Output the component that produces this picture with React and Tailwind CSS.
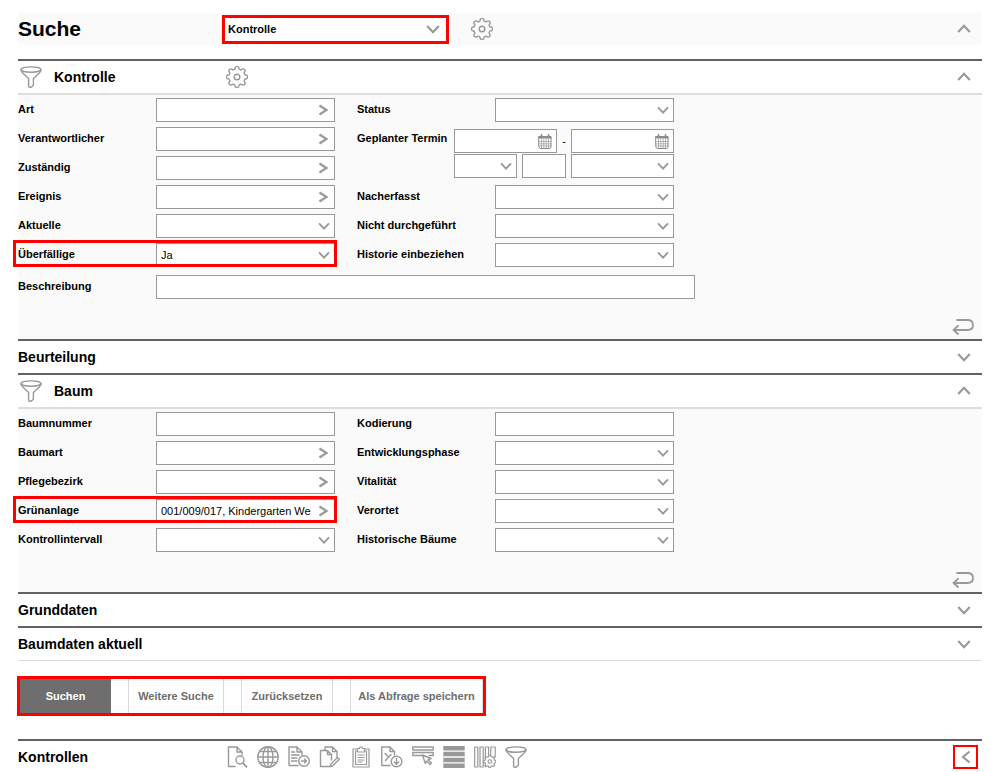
import { useId, useState } from "react";

function Icon({ children, className = "w-[22px] h-[22px]", box = "0 0 22 22", stroke = 1.4 }) {
  return (
    <svg
      className={`${className} shrink-0`}
      viewBox={box}
      fill="none"
      stroke="currentColor"
      strokeWidth={stroke}
      strokeLinecap="round"
      strokeLinejoin="round"
      aria-hidden="true"
    >
      {children}
    </svg>
  );
}

const chevrons = {
  down: "M1.2 4 L7 10.2 L12.8 4",
  up: "M1.2 10 L7 3.8 L12.8 10",
  left: "M10.5 1.5 L4 7 L10.5 12.5",
  right: "M3.5 2.5 L10.5 7 L3.5 11.5",
};

function Chevron({ dir, className = "w-3.5 h-3.5" }) {
  return (
    <Icon className={className} box="0 0 14 14" stroke={2.2}>
      <path d={chevrons[dir]} strokeLinecap="butt" strokeLinejoin="miter" />
    </Icon>
  );
}

// eight rounded teeth with a round notch between each pair
const point = (deg, r) => {
  const a = (deg * Math.PI) / 180;
  return `${(11 + r * Math.cos(a)).toFixed(2)} ${(11 + r * Math.sin(a)).toFixed(2)}`;
};
const gearPath =
  `M${point(-11, 9.6)}` +
  [0, 45, 90, 135, 180, 225, 270, 315]
    .map((t) => `A2 2 0 0 1 ${point(t + 11, 9.6)}A2 2 0 0 0 ${point(t + 34, 9.6)}`)
    .join("") +
  "Z";

function GearIcon() {
  return (
    <Icon>
      <path d={gearPath} />
      <circle cx="11" cy="11" r="2.8" />
    </Icon>
  );
}

function FunnelIcon() {
  return (
    <Icon>
      <ellipse cx="11" cy="3.6" rx="10" ry="2.7" />
      <path d="M1 3.8 C1 5.5 2 6.3 3 7.2 L8.6 12.6 V20 C8.6 21.6 11 21.6 12 20.6 L13.4 19 V12.6 L19 7.2 C20 6.3 21 5.5 21 3.8" />
    </Icon>
  );
}

function ReturnIcon() {
  return (
    <Icon className="w-[22px] h-4" box="0 0 22 16" stroke={1.8}>
      <path d="M5 1 H15.5 C19 1 21 3 21 6 S19 11 15.5 11 H1.5 M6 6.8 L1.5 11 L6 15" />
    </Icon>
  );
}

function CalendarIcon() {
  return (
    <Icon className="w-3.5 h-[15px]" box="0 0 14 15" stroke={1}>
      <path d="M1 2.5 H13 V13 L12 14.5 H2 L1 13 Z" />
      <path d="M1.5 3.5 H12.5" strokeWidth="2.2" />
      <path d="M3.5 0.5 V3 M10.5 0.5 V3" strokeWidth="1.6" />
      <path d="M1 7.5 H13 M1 9.8 H13 M1 12 H13 M3.5 5 V14 M5.8 5 V14 M8.2 5 V14 M10.5 5 V14" strokeWidth="0.6" />
    </Icon>
  );
}

const toolbar = [
  {
    label: "Vorschau",
    icon: (
      <Icon>
        <path d="M9 20.5 H2.5 V1 H11 L16 6 V9 M11 1 V6 H16" />
        <circle cx="14" cy="14" r="4" />
        <path d="M17 17 L20.5 20.8" strokeWidth="1.8" />
      </Icon>
    ),
  },
  {
    label: "Karte",
    icon: (
      <Icon>
        <circle cx="11" cy="11" r="10.2" />
        <ellipse cx="11" cy="11" rx="5" ry="10.2" />
        <path d="M11 1 V21 M1 11 H21 M2.6 5.5 H19.4 M2.6 16.5 H19.4" />
      </Icon>
    ),
  },
  {
    label: "Exportieren",
    icon: (
      <Icon>
        <path d="M10 19.5 H1 V1 H9 L14 6 V9 M9 1 V6 H14 M3.5 6 H6.5 M3.5 9 H11 M3.5 12 H9 M3.5 15 H9" />
        <circle cx="16" cy="15" r="5.2" />
        <path d="M13.5 15 H18.5 M16.5 13 L18.5 15 L16.5 17" />
      </Icon>
    ),
  },
  {
    label: "Bearbeiten",
    icon: (
      <Icon>
        <path d="M6 4.5 V1 H13.5 L18 5.5 V11 M13.5 1 V5.5 H18" />
        <path d="M11 20.5 H1.5 V4.5 H8.5 L12.5 8.5 V14 M8.5 4.5 V8.5 H12.5" />
        <path d="M18.5 11.5 L20.3 13.2 L13.8 19.8 L11.3 20.5 L12 18 Z" />
      </Icon>
    ),
  },
  {
    label: "Zwischenablage",
    icon: (
      <Icon stroke={1.2}>
        <path d="M7 3 H3 V21 H19 V3 H15" />
        <path d="M7 5 H5.5 V18.5 H16.5 V5 H15" />
        <path d="M7.5 6 V2.5 H9.5 L10 1 H12 L12.5 2.5 H14.5 V6 Z M8 9 H14 M8 11.5 H14 M8 14 H14 M8 16 H12" />
      </Icon>
    ),
  },
  {
    label: "Herunterladen",
    icon: (
      <Icon>
        <path d="M9 19.5 H0.8 V1 H9 L13.5 5.5 V9 M9 1 V5.5 H13.5" />
        <path d="M4 7.5 L7.5 11 M10 8.5 L4.5 14.5" />
        <circle cx="15.5" cy="15.5" r="5.3" />
        <path d="M15.5 12.5 V18 M13.2 16 L15.5 18.2 L17.8 16" />
      </Icon>
    ),
  },
  {
    label: "Zeile auswählen",
    icon: (
      <Icon>
        <path d="M0.8 1 H21.2 V4 H0.8 Z M10 9.5 H0.8 V6.5 H21.2 V9.5 H17" />
        <path d="M10.5 9 L19 12.5 L16 13.8 L19.5 17 L18 18.5 L14.7 15 L13.3 17.5 Z" />
      </Icon>
    ),
  },
  {
    label: "Liste",
    icon: (
      <Icon stroke={4.4}>
        <path d="M0.3 2.2 H21.7 M0.3 8 H21.7 M0.3 14 H21.7 M0.3 19.8 H21.7" strokeLinecap="butt" />
      </Icon>
    ),
  },
  {
    label: "Spalten konfigurieren",
    icon: (
      <Icon stroke={1.2}>
        <path d="M0.7 1 H3.8 V21 H0.7 Z M6 1 H9.2 V21 H6 Z M11.4 11 V1 H14.6 V9 M16.8 9 V1 H18.2 M18.2 1 H21.2 V11 M11.4 19 V21" />
        <g transform="translate(9.3 9) scale(0.59)" strokeWidth="2">
          <path d={gearPath} />
          <circle cx="11" cy="11" r="3" />
        </g>
      </Icon>
    ),
  },
  { label: "Filter", icon: <FunnelIcon /> },
];

const boxClass = "h-6 border border-[#989898] bg-white text-[11px] text-black";

function SelectBox({ id, value = "", width = "w-full", label }) {
  return (
    <div className={`relative flex ${width}`}>
      <select
        id={id}
        aria-label={label}
        defaultValue={value}
        className={`${boxClass} w-full appearance-none pl-1 pr-5 outline-none`}
      >
        <option value={value}>{value}</option>
      </select>
      <span className="pointer-events-none absolute inset-y-0 right-[5px] flex items-center text-[#999]">
        <Chevron dir="down" className="w-3 h-3" />
      </span>
    </div>
  );
}

function LookupBox({ id, value = "", label }) {
  return (
    <div className={`${boxClass} flex w-full items-center`}>
      <input id={id} defaultValue={value} className="h-full min-w-0 grow pl-1 outline-none" />
      <button type="button" aria-label={`${label} auswählen`} className="mr-1 ml-1 text-[#999]">
        <Chevron dir="right" />
      </button>
    </div>
  );
}

function DateBox({ id, label }) {
  return (
    <div className={`${boxClass} flex w-[103px] items-center`}>
      <input id={id} aria-label={label} className="h-full min-w-0 grow pl-1 outline-none" />
      <button type="button" aria-label="Kalender öffnen" className="mr-1 text-[#8c8c8c]">
        <CalendarIcon />
      </button>
    </div>
  );
}

function Field({ label, type = "select", value, marked }) {
  const id = useId();
  return (
    <div
      className={`flex items-center ${
        marked
          ? "relative after:pointer-events-none after:absolute after:-top-[3px] after:bottom-0 after:-left-[5px] after:-right-[2px] after:border-3 after:border-[#fe0000]"
          : ""
      }`}
    >
      <label htmlFor={id} className="w-[138px] shrink-0 pb-0.5">
        {label}
      </label>
      <div className="flex w-[179px] font-normal">
        {type === "select" && <SelectBox id={id} value={value} />}
        {type === "lookup" && <LookupBox id={id} value={value} label={label} />}
        {type === "text" && <input id={id} className={`${boxClass} w-full px-1 outline-none`} />}
      </div>
    </div>
  );
}

function PlannedDate() {
  const id = useId();
  return (
    <div className="flex h-[53px] items-center">
      <label
        htmlFor={id}
        className="flex h-6 w-[97px] shrink-0 items-center self-start pb-0.5 whitespace-nowrap"
      >
        Geplanter Termin
      </label>
      <div className="flex w-[220px] flex-col gap-px font-normal">
        <div className="flex items-center justify-between">
          <DateBox id={id} />
          <span>-</span>
          <DateBox label="Geplanter Termin bis" />
        </div>
        <div className="flex justify-between">
          <SelectBox width="w-[63px]" label="Operator" />
          <input aria-label="Anzahl" className={`${boxClass} w-11 px-1 outline-none`} />
          <SelectBox width="w-[103px]" label="Zeitraum" />
        </div>
      </div>
    </div>
  );
}

function Section({ title, filter, settings, initialOpen = false, children }) {
  const [open, setOpen] = useState(initialOpen);
  return (
    <section className="border-t-2 border-[#626262]">
      <div className="flex h-8 items-center">
        <div className={`flex items-center ${filter ? "w-[208px] gap-3 pl-0.5" : ""}`}>
          {filter && (
            <span className="text-[#999]">
              <FunnelIcon />
            </span>
          )}
          <h2 className="text-sm font-bold">{title}</h2>
        </div>
        {settings && (
          <button type="button" aria-label="Einstellungen" className="text-[#999]">
            <GearIcon />
          </button>
        )}
        <button
          type="button"
          aria-label={`${title} ${open ? "zuklappen" : "aufklappen"}`}
          aria-expanded={open}
          onClick={() => setOpen(!open)}
          className="mr-[11px] ml-auto text-[#999]"
        >
          <Chevron dir={open ? "up" : "down"} />
        </button>
      </div>
      {open && children && (
        <div className="border-t-2 border-[#dedede] bg-[#fafafa] pt-[3px] pb-1 text-[11px] font-bold">
          {children}
          <div className="mt-5 flex justify-end pr-2">
            <button type="button" aria-label={`${title} zurücksetzen`} className="text-[#999]">
              <ReturnIcon />
            </button>
          </div>
        </div>
      )}
    </section>
  );
}

function Actions() {
  const plain = "border-x border-[#dcdcdc] bg-white text-[#6e6e6e]";
  return (
    <div className="-ml-px flex w-fit gap-[17px] border-3 border-[#fe0000] text-[11px] font-bold whitespace-nowrap">
      <button type="button" className="h-[34px] w-[91px] bg-[#6e6e6e] text-white">
        Suchen
      </button>
      <button type="button" className={`${plain} w-24`}>
        Weitere Suche
      </button>
      <button type="button" className={`${plain} w-[92px]`}>
        Zurücksetzen
      </button>
      <button type="button" className={`${plain} w-[133px]`}>
        Als Abfrage speichern
      </button>
    </div>
  );
}

export default function App() {
  return (
    <main className="bg-white px-[18px] pt-[13px] font-['Liberation_Sans',Arial,sans-serif] text-black">
      <header className="mb-3.5 flex h-8 items-center bg-[#fafafa]">
        <h1 className="w-[204px] text-[21px] font-bold">Suche</h1>
        <div className="relative mr-[22px] flex w-[227px]">
          <select
            aria-label="Suchobjekt"
            className="h-[29px] w-full appearance-none border-3 border-[#fe0000] bg-white pl-[3px] text-[11px] font-bold outline-none"
          >
            <option>Kontrolle</option>
          </select>
          <span className="pointer-events-none absolute inset-y-0 right-[9px] flex items-center text-[#999]">
            <Chevron dir="down" />
          </span>
        </div>
        <button type="button" aria-label="Einstellungen" className="text-[#999]">
          <GearIcon />
        </button>
        <button type="button" aria-label="Suche zuklappen" className="mr-[11px] ml-auto text-[#999]">
          <Chevron dir="up" />
        </button>
      </header>

      <Section title="Kontrolle" filter settings initialOpen>
        <div className="flex gap-[22px]">
          <div className="flex flex-col gap-[5px]">
            <Field label="Art" type="lookup" />
            <Field label="Verantwortlicher" type="lookup" />
            <Field label="Zuständig" type="lookup" />
            <Field label="Ereignis" type="lookup" />
            <Field label="Aktuelle" />
            <Field label="Überfällige" value="Ja" marked />
          </div>
          <div className="flex flex-col gap-[5px]">
            <Field label="Status" />
            <PlannedDate />
            <Field label="Nacherfasst" />
            <Field label="Nicht durchgeführt" />
            <Field label="Historie einbeziehen" />
          </div>
        </div>
        <div className="mt-2 flex items-center">
          <label htmlFor="beschreibung" className="w-[138px] pb-0.5">
            Beschreibung
          </label>
          <input id="beschreibung" className={`${boxClass} w-[539px] px-1 font-normal outline-none`} />
        </div>
      </Section>

      <Section title="Beurteilung" />

      <Section title="Baum" filter initialOpen>
        <div className="flex gap-[22px]">
          <div className="flex flex-col gap-[5px]">
            <Field label="Baumnummer" type="text" />
            <Field label="Baumart" type="lookup" />
            <Field label="Pflegebezirk" type="lookup" />
            <Field label="Grünanlage" type="lookup" value="001/009/017, Kindergarten We" marked />
            <Field label="Kontrollintervall" />
          </div>
          <div className="flex flex-col gap-[5px]">
            <Field label="Kodierung" type="text" />
            <Field label="Entwicklungsphase" />
            <Field label="Vitalität" />
            <Field label="Verortet" />
            <Field label="Historische Bäume" />
          </div>
        </div>
      </Section>

      <Section title="Grunddaten" />
      <Section title="Baumdaten aktuell" />

      <div className="border-t border-[#dcdcdc] pt-[15px] pb-[23px]">
        <Actions />
      </div>

      <section className="flex h-[33px] items-center border-t-2 border-[#626262]">
        <h2 className="w-[208px] text-sm font-bold">Kontrollen</h2>
        <div className="flex gap-[9px] text-[#999]">
          {toolbar.map((t) => (
            <button key={t.label} type="button" aria-label={t.label}>
              {t.icon}
            </button>
          ))}
        </div>
        <button
          type="button"
          aria-label="Kontrollen aufklappen"
          className="mr-1 ml-auto flex h-6 w-[25px] items-center justify-center border-2 border-[#fe0000] text-[#999]"
        >
          <Chevron dir="left" />
        </button>
      </section>
    </main>
  );
}
